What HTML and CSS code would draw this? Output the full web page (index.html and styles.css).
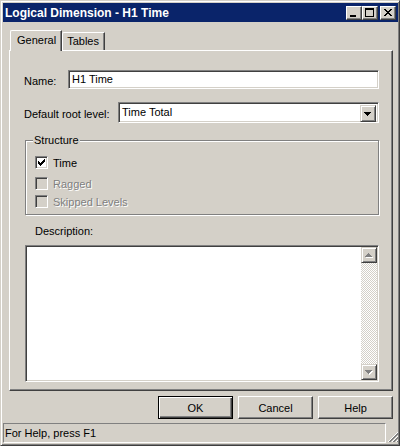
FILE: index.html
```html
<!DOCTYPE html>
<html>
<head>
<meta charset="utf-8">
<title>Logical Dimension - H1 Time</title>
<link rel="stylesheet" href="styles.css">
</head>
<body>
<div class="window">
  <div class="titlebar">
    <span class="title">Logical Dimension - H1 Time</span>
    <div class="tbtns">
      <span class="tbtn">
        <svg width="14" height="12" shape-rendering="crispEdges"><rect x="3" y="8" width="6" height="2" fill="#000"/></svg>
      </span>
      <span class="tbtn">
        <svg width="14" height="12" shape-rendering="crispEdges"><rect x="2" y="1" width="9" height="2" fill="#000"/><rect x="2" y="1" width="1" height="9" fill="#000"/><rect x="10" y="1" width="1" height="9" fill="#000"/><rect x="2" y="9" width="9" height="1" fill="#000"/></svg>
      </span>
      <span class="tbtn close">
        <svg width="14" height="12" shape-rendering="crispEdges" fill="#000">
          <rect x="3" y="2" width="2" height="1"/><rect x="9" y="2" width="2" height="1"/>
          <rect x="4" y="3" width="2" height="1"/><rect x="8" y="3" width="2" height="1"/>
          <rect x="5" y="4" width="4" height="1"/>
          <rect x="6" y="5" width="2" height="1"/>
          <rect x="5" y="6" width="4" height="1"/>
          <rect x="4" y="7" width="2" height="1"/><rect x="8" y="7" width="2" height="1"/>
          <rect x="3" y="8" width="2" height="1"/><rect x="9" y="8" width="2" height="1"/>
        </svg>
      </span>
    </div>
  </div>

  <div class="tabs">
    <div class="tab active">General</div>
    <div class="tab">Tables</div>
  </div>

  <div class="panel">
    <div class="row name-row">
      <label class="lbl name-lbl">Name:</label>
      <div class="field name-field">H1 Time</div>
    </div>
    <div class="row combo-row">
      <label class="lbl combo-lbl">Default root level:</label>
      <div class="field combo">
        <span class="combo-value">Time Total</span>
        <span class="drop">
          <svg width="12" height="13" shape-rendering="crispEdges" fill="#000"><rect x="2" y="5" width="7" height="1"/><rect x="3" y="6" width="5" height="1"/><rect x="4" y="7" width="3" height="1"/><rect x="5" y="8" width="1" height="1"/></svg>
        </span>
      </div>
    </div>

    <div class="group">
      <span class="legend">Structure</span>
      <div class="check-row">
        <span class="cbox">
          <svg width="9" height="9" shape-rendering="crispEdges" fill="#000">
            <rect x="1" y="3" width="1" height="3"/><rect x="2" y="4" width="1" height="3"/><rect x="3" y="5" width="1" height="3"/><rect x="4" y="4" width="1" height="3"/><rect x="5" y="3" width="1" height="3"/><rect x="6" y="2" width="1" height="3"/><rect x="7" y="1" width="1" height="3"/>
          </svg>
        </span>
        <span class="clabel">Time</span>
      </div>
      <div class="check-row disabled ragged">
        <span class="cbox"></span>
        <span class="clabel">Ragged</span>
      </div>
      <div class="check-row disabled skipped">
        <span class="cbox"></span>
        <span class="clabel">Skipped Levels</span>
      </div>
    </div>

    <div class="desc-lbl">Description:</div>
    <div class="desc">
      <div class="desc-text"></div>
      <div class="vscroll">
        <span class="sbtn">
          <svg width="12" height="12" shape-rendering="crispEdges"><g fill="#fff"><rect x="6" y="5" width="1" height="1"/><rect x="5" y="6" width="3" height="1"/><rect x="4" y="7" width="5" height="1"/><rect x="3" y="8" width="7" height="1"/></g><g fill="#808080"><rect x="5" y="4" width="1" height="1"/><rect x="4" y="5" width="3" height="1"/><rect x="3" y="6" width="5" height="1"/><rect x="2" y="7" width="7" height="1"/></g></svg>
        </span>
        <span class="track"></span>
        <span class="sbtn">
          <svg width="12" height="12" shape-rendering="crispEdges"><g fill="#fff"><rect x="3" y="5" width="7" height="1"/><rect x="4" y="6" width="5" height="1"/><rect x="5" y="7" width="3" height="1"/><rect x="6" y="8" width="1" height="1"/></g><g fill="#808080"><rect x="2" y="4" width="7" height="1"/><rect x="3" y="5" width="5" height="1"/><rect x="4" y="6" width="3" height="1"/><rect x="5" y="7" width="1" height="1"/></g></svg>
        </span>
      </div>
    </div>
  </div>

  <div class="buttons">
    <button class="btn default">OK</button>
    <button class="btn">Cancel</button>
    <button class="btn">Help</button>
  </div>

  <div class="statusbar">
    <div class="pane">For Help, press F1</div>
    <span class="grip">
      <svg width="11" height="11" shape-rendering="crispEdges">
        <line x1="10.5" y1="0.5" x2="0.5" y2="10.5" stroke="#fff"/>
        <line x1="10.5" y1="1.5" x2="1.5" y2="10.5" stroke="#808080"/>
        <line x1="10.5" y1="2.5" x2="2.5" y2="10.5" stroke="#808080"/>
        <line x1="10.5" y1="4.5" x2="4.5" y2="10.5" stroke="#fff"/>
        <line x1="10.5" y1="5.5" x2="5.5" y2="10.5" stroke="#808080"/>
        <line x1="10.5" y1="6.5" x2="6.5" y2="10.5" stroke="#808080"/>
        <line x1="10.5" y1="8.5" x2="8.5" y2="10.5" stroke="#fff"/>
        <line x1="10.5" y1="9.5" x2="9.5" y2="10.5" stroke="#808080"/>
      </svg>
    </span>
  </div>
</div>
</body>
</html>
```

FILE: styles.css
```css
* { box-sizing: border-box; }

html, body {
  margin: 0;
  padding: 0;
  background: #d4d0c8;
}

body {
  font-family: "Liberation Sans", Arial, sans-serif;
  font-size: 11px;
  color: #000;
}

.window {
  width: 400px;
  height: 446px;
  border: 1px solid;
  border-color: #d4d0c8 #404040 #404040 #d4d0c8;
  box-shadow: inset 1px 1px #fff, inset -1px -1px #808080;
  padding: 2px 1px 2px 2px;
  display: flex;
  flex-direction: column;
  background: #d4d0c8;
}

/* title bar */
.titlebar {
  height: 19px;
  flex: none;
  background: #0a246a;
  display: flex;
  align-items: center;
  padding-left: 2px;
  padding-right: 2px;
}
.title {
  flex: 1;
  color: #fff;
  font-weight: bold;
  font-size: 12px;
  white-space: nowrap;
}
.tbtns {
  display: flex;
  align-items: center;
}
.tbtn {
  width: 16px;
  height: 14px;
  display: block;
  background: #d4d0c8;
  border: 1px solid;
  border-color: #fff #404040 #404040 #fff;
  box-shadow: inset -1px -1px #808080;
}
.tbtn svg { display: block; }
.tbtn.close { margin-left: 2px; }

/* tabs */
.tabs {
  flex: none;
  height: 20px;
  margin-top: 8px;
  margin-left: 6px;
  display: flex;
  align-items: flex-end;
  position: relative;
  z-index: 1;
}
.tab {
  height: 18px;
  background: #d4d0c8;
  border-top: 1px solid #fff;
  border-left: 1px solid #fff;
  border-right: 1px solid #404040;
  box-shadow: inset -1px 0 #808080;
  border-top-left-radius: 2px;
  padding: 2px 5px 0 4px;
  line-height: 13px;
}
.tab.active {
  height: 21px;
  margin-bottom: -1px;
  margin-left: 1px;
  padding: 3px 5px 0 6px;
}

/* panel */
.panel {
  flex: 1;
  margin: 0 5px 0 6px;
  border: 1px solid;
  border-color: #fff #404040 #404040 #fff;
  box-shadow: inset -1px -1px #808080;
  padding: 19px 13px 8px 14px;
  display: flex;
  flex-direction: column;
}

.row {
  display: flex;
  align-items: center;
}
.lbl {
  flex: none;
  padding-top: 2px;
}
.name-lbl { width: 44px; }
.combo-lbl { width: 94px; }

.field {
  flex: 1;
  background: #fff;
  border: 1px solid;
  border-color: #808080 #fff #fff #808080;
  box-shadow: inset 1px 1px #404040, inset -1px -1px #d4d0c8;
}
.name-field {
  height: 19px;
  padding: 2px 3px;
  line-height: 13px;
}
.combo-row { margin-top: 13px; }
.combo {
  height: 21px;
  padding: 1px;
  display: flex;
}
.combo-value {
  flex: 1;
  padding: 2px 2px;
  line-height: 13px;
}
.drop {
  width: 16px;
  height: 17px;
  margin-top: 1px;
  margin-right: 1px;
  background: #d4d0c8;
  border: 1px solid;
  border-color: #d4d0c8 #404040 #404040 #d4d0c8;
  box-shadow: inset 1px 1px #fff, inset -1px -1px #808080;
  padding: 1px;
}
.drop svg { display: block; }

/* group */
.group {
  position: relative;
  margin-top: 17px;
  margin-left: 1px;
  height: 75px;
  border: 1px solid #808080;
  box-shadow: 1px 1px #fff, inset 1px 1px #fff;
  padding: 15px 0 0 9px;
}
.legend {
  position: absolute;
  left: 7px;
  top: -7px;
  padding: 0 1px;
  line-height: 13px;
  background: #d4d0c8;
}
.check-row {
  display: flex;
  align-items: center;
  height: 13px;
}
.check-row.ragged { margin-top: 8px; }
.check-row.skipped { margin-top: 5px; }
.cbox {
  width: 13px;
  height: 13px;
  flex: none;
  background: #fff;
  border: 1px solid;
  border-color: #808080 #fff #fff #808080;
  box-shadow: inset 1px 1px #404040, inset -1px -1px #d4d0c8;
  padding: 1px;
}
.cbox svg { display: block; }
.disabled .cbox { background: #d4d0c8; }
.clabel {
  margin-left: 5px;
  line-height: 13px;
  padding-top: 1px;
}
.disabled .clabel {
  color: #808080;
  text-shadow: 1px 1px #fff;
}

/* description */
.desc-lbl {
  margin-top: 10px;
  margin-left: 11px;
  line-height: 13px;
}
.desc {
  flex: 1;
  margin-top: 7px;
  margin-left: 1px;
  display: flex;
  border: 1px solid;
  border-color: #808080 #fff #fff #808080;
  box-shadow: inset 1px 1px #404040, inset -1px -1px #d4d0c8;
  padding: 1px;
  background: #fff;
}
.desc-text { flex: 1; }
.vscroll {
  width: 16px;
  display: flex;
  flex-direction: column;
}
.sbtn {
  width: 16px;
  height: 16px;
  flex: none;
  background: #d4d0c8;
  border: 1px solid;
  border-color: #d4d0c8 #404040 #404040 #d4d0c8;
  box-shadow: inset 1px 1px #fff, inset -1px -1px #808080;
  padding: 1px;
}
.sbtn svg { display: block; }
.track {
  flex: 1;
  background: repeating-conic-gradient(#fff 0 25%, #d4d0c8 0 50%) 0 0 / 2px 2px;
}

/* buttons */
.buttons {
  flex: none;
  margin-top: 5px;
  margin-right: 5px;
  display: flex;
  justify-content: flex-end;
  gap: 5px;
}
.btn {
  width: 75px;
  height: 23px;
  font: inherit;
  color: #000;
  background: #d4d0c8;
  border: 1px solid;
  border-color: #fff #404040 #404040 #fff;
  box-shadow: inset -1px -1px #808080;
  padding: 0;
}
.btn.default {
  border-color: #000;
  box-shadow: inset 1px 1px #fff, inset -1px -1px #404040, inset -2px -2px #808080;
}

/* status bar */
.statusbar {
  flex: none;
  height: 20px;
  margin-top: 4px;
  display: flex;
  align-items: flex-end;
}
.pane {
  flex: 1;
  height: 20px;
  border: 1px solid;
  border-color: #808080 #fff #fff #808080;
  padding: 3px 1px 0 1px;
  line-height: 13px;
  margin-right: 1px;
}
.grip {
  width: 11px;
  height: 11px;
  flex: none;
  margin-bottom: 0;
}
.grip svg { display: block; }
```
